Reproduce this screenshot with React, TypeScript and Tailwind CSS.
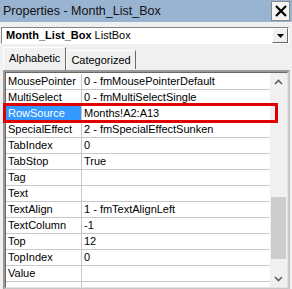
import React from "react";

const rows: [string, string][] = [
  ["MousePointer", "0 - fmMousePointerDefault"],
  ["MultiSelect", "0 - fmMultiSelectSingle"],
  ["RowSource", "Months!A2:A13"],
  ["SpecialEffect", "2 - fmSpecialEffectSunken"],
  ["TabIndex", "0"],
  ["TabStop", "True"],
  ["Tag", ""],
  ["Text", ""],
  ["TextAlign", "1 - fmTextAlignLeft"],
  ["TextColumn", "-1"],
  ["Top", "12"],
  ["TopIndex", "0"],
  ["Value", ""],
];

export default function App() {
  return (
    <div
      className="w-[292px] h-[289px] bg-[#f0f0f0] overflow-hidden text-black"
      style={{ fontFamily: '"Liberation Sans", Arial, sans-serif' }}
    >
      {/* Title bar */}
      <div className="h-[22px] bg-[#99b4d1] flex items-center justify-between pl-[3px] pr-[2px]">
        <span className="text-[12.5px] text-[#111]">Properties - Month_List_Box</span>
        <div className="w-[19px] h-[20px] bg-[#f4f4f4] border border-[#888] flex items-center justify-center">
          <svg width="12" height="12" viewBox="0 0 12 12">
            <path d="M1 1 L11 11 M11 1 L1 11" stroke="#000" strokeWidth="2.2" />
          </svg>
        </div>
      </div>

      {/* Object combo */}
      <div className="mt-[5px] mx-[1px] w-[288px] h-[17px] bg-white border-t border-l border-[#828282] border-r border-b border-r-[#fff] border-b-[#fff] flex items-center">
        <div className="flex-1 pl-[4px] text-[11px] leading-[15px]">
          <span className="font-bold">Month_List_Box</span> ListBox
        </div>
        <div className="w-[16px] h-[15px] bg-[#f0f0f0] border border-t-[#fff] border-l-[#fff] border-r-[#696969] border-b-[#696969] flex items-center justify-center">
          <svg width="7" height="4" viewBox="0 0 7 4">
            <path d="M0 0 H7 L3.5 4 Z" fill="#000" />
          </svg>
        </div>
      </div>

      {/* Tabs */}
      <div className="mt-[2px] ml-[3px] h-[24px] flex items-end">
        <div className="h-[23px] px-[5px] pt-[3px] border-t border-l border-[#fff] border-r border-r-[#696969] text-[11px] leading-[15px]">
          Alphabetic
        </div>
        <div className="h-[19px] px-[4px] pt-[2px] border-t border-l border-[#fff] border-r border-r-[#696969] text-[11px] leading-[15px] mb-[1px]">
          Categorized
        </div>
      </div>

      {/* Property grid */}
      <div className="relative ml-[3px] w-[287px] h-[220px] border-2 border-t-[#9a9a9a] border-l-[#9a9a9a] border-r-[#c8c8c8] border-b-[#c8c8c8]">
        <div className="flex h-full border border-t-[#696969] border-l-[#696969] border-r-[#e3e3e3] border-b-[#e3e3e3] bg-white">
          <div className="flex-1 pt-[1px] overflow-hidden">
            {rows.map(([name, value]) => (
              <div key={name} className="flex h-[16px] border-b border-[#c8c8c8] text-[11px] leading-[15px]">
                <div
                  className={`w-[76px] pl-[2px] border-r border-[#c8c8c8] ${
                    name === "RowSource" ? "bg-[#3399ff] text-white" : ""
                  }`}
                >
                  {name}
                </div>
                <div className="flex-1 pl-[2px]">{value}</div>
              </div>
            ))}
            <div className="flex h-[16px]">
              <div className="w-[76px] border-r border-[#c8c8c8]" />
            </div>
          </div>
          {/* Scrollbar */}
          <div className="w-[17px] bg-[#f0f0f0] flex flex-col items-center">
            <div className="h-[17px] flex items-center justify-center">
              <svg width="9" height="6" viewBox="0 0 9 6">
                <path d="M1 5 L4.5 1.5 L8 5" stroke="#606060" strokeWidth="1.6" fill="none" />
              </svg>
            </div>
            <div className="w-[15px] h-[62px] bg-[#cdcdcd] mt-[107px]" />
            <div className="flex-1" />
            <div className="h-[17px] flex items-center justify-center">
              <svg width="9" height="6" viewBox="0 0 9 6">
                <path d="M1 1 L4.5 4.5 L8 1" stroke="#606060" strokeWidth="1.6" fill="none" />
              </svg>
            </div>
          </div>
        </div>
        {/* Highlight annotation */}
        <div className="absolute left-[-2px] top-[31px] w-[275px] h-[20px] border-[3px] border-[#e00000]" />
      </div>
    </div>
  );
}
